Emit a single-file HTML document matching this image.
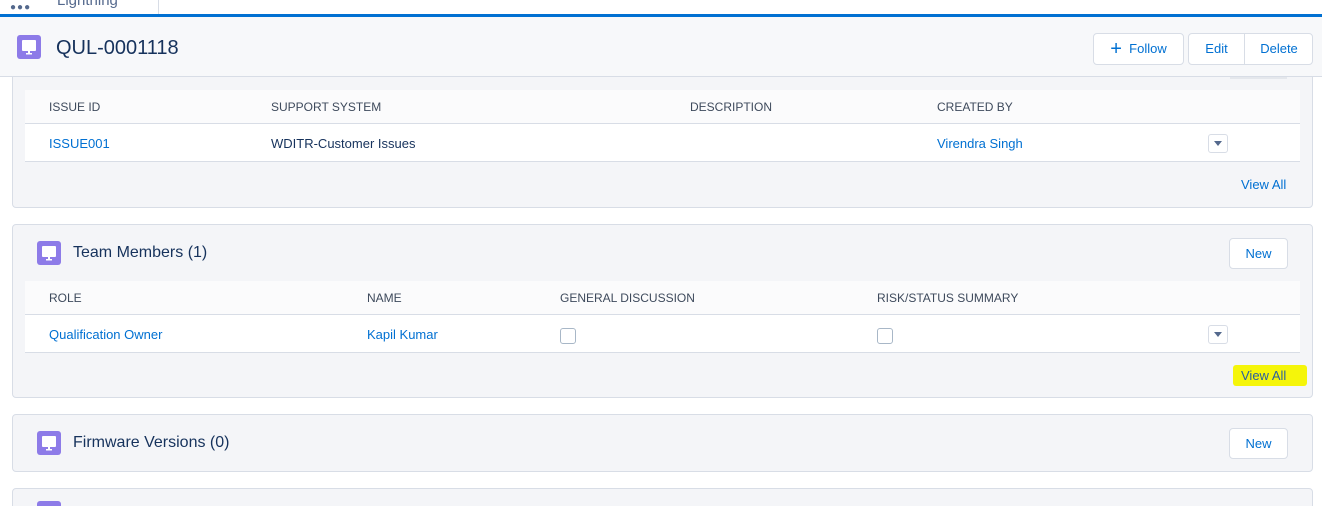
<!DOCTYPE html>
<html><head><style>
*{box-sizing:border-box;margin:0;padding:0}
html{width:1322px;height:506px;overflow:hidden}
body{width:1322px;height:506px;overflow:hidden;background:#fff;font-family:"Liberation Sans",sans-serif;color:#16325c;position:relative;font-size:13px}
.abs{position:absolute}
.top{left:0;top:0;width:1322px;height:14px;background:#fff}
.blue{left:0;top:14px;width:1322px;height:3px;background:#0070d2}
.hdr{left:0;top:17px;width:1322px;height:60px;background:#f7f8fa;border-bottom:1px solid #d8dde6}
.ico{width:24px;height:24px;background:#8d7be8;border-radius:3px}
.ico svg{display:block}
.card{left:12px;width:1301px;background:#f4f5f8;border:1px solid #d8dde6;border-radius:4px}
.th{background:#fbfbfc;height:34px;border-bottom:1px solid #d8dde6}
.row{background:#fff;height:38px;border-bottom:1px solid #d8dde6}
.t{position:absolute;white-space:nowrap}
.lh{font-size:12px;color:#3e4a5c}
.lk{color:#0070d2}
.btn{position:absolute;background:#fff;border:1px solid #d8dde6;border-radius:4px;color:#0070d2;font-size:13px;text-align:center}
.dd{position:absolute;width:20px;height:19px;border:1px solid #d8dde6;border-radius:3px;background:#fff}
.dd:after{content:"";position:absolute;left:5px;top:6px;border-left:4px solid transparent;border-right:4px solid transparent;border-top:5px solid #54698d}
.cb{position:absolute;width:16px;height:16px;border:1px solid #a8b7c7;border-radius:3px;background:#fff}
</style></head><body>
<div class="abs top"></div>
<div class="abs" style="left:10px;top:2px;font-size:10px;color:#54698d;letter-spacing:1px">●●●</div>
<div class="abs" style="left:57px;top:-8px;font-size:15px;color:#54698d">Lightning</div>
<div class="abs" style="left:158px;top:0;width:1px;height:14px;background:#d8dde6"></div>
<div class="abs blue"></div>
<div class="abs hdr"></div>
<div class="abs ico" style="left:17px;top:35px"><svg width="24" height="24"><rect x="5" y="5" width="14" height="11" rx="1" fill="#fff"/><rect x="11" y="16" width="2" height="2" fill="#fff"/><rect x="9" y="18" width="6" height="1.5" fill="#fff"/></svg></div>
<div class="abs" style="left:56px;top:37px;font-size:20px;color:#16325c">QUL-0001118</div>
<div class="btn" style="left:1093px;top:33px;width:91px;height:32px;line-height:30px"><span style="font-size:20px;vertical-align:-2px">+</span>&nbsp; Follow</div>
<div class="btn" style="left:1188px;top:33px;width:125px;height:32px;line-height:30px"><span style="position:absolute;left:0;width:55px">Edit</span><span style="position:absolute;left:55px;top:0;width:1px;height:30px;background:#d8dde6"></span><span style="position:absolute;left:56px;width:68px">Delete</span></div>

<div class="abs card" style="top:60px;height:148px;z-index:-1"></div>
<div class="abs" style="left:12px;top:77px;width:1301px;height:13px;background:#f4f5f8;border-left:1px solid #d8dde6;border-right:1px solid #d8dde6"></div>
<div class="abs" style="left:1230px;top:77px;width:57px;height:2px;background:#e4e7ec"></div>
<div class="abs th" style="left:25px;top:90px;width:1275px"></div>
<div class="t lh" style="left:49px;top:100px">ISSUE ID</div>
<div class="t lh" style="left:271px;top:100px">SUPPORT SYSTEM</div>
<div class="t lh" style="left:690px;top:100px">DESCRIPTION</div>
<div class="t lh" style="left:937px;top:100px">CREATED BY</div>
<div class="abs row" style="left:25px;top:124px;width:1275px"></div>
<div class="t lk" style="left:49px;top:136px">ISSUE001</div>
<div class="t" style="left:271px;top:136px;color:#16325c">WDITR-Customer Issues</div>
<div class="t lk" style="left:937px;top:136px">Virendra Singh</div>
<div class="dd" style="left:1208px;top:134px"></div>
<div class="t lk" style="left:1241px;top:177px">View All</div>

<div class="abs card" style="top:224px;height:174px"></div>
<div class="abs ico" style="left:37px;top:241px"><svg width="24" height="24"><rect x="5" y="5" width="14" height="11" rx="1" fill="#fff"/><rect x="11" y="16" width="2" height="2" fill="#fff"/><rect x="9" y="18" width="6" height="1.5" fill="#fff"/></svg></div>
<div class="t" style="left:73px;top:244px;font-size:16px">Team Members (1)</div>
<div class="btn" style="left:1229px;top:238px;width:59px;height:31px;line-height:29px">New</div>
<div class="abs th" style="left:25px;top:281px;width:1275px"></div>
<div class="t lh" style="left:49px;top:291px">ROLE</div>
<div class="t lh" style="left:367px;top:291px">NAME</div>
<div class="t lh" style="left:560px;top:291px">GENERAL DISCUSSION</div>
<div class="t lh" style="left:877px;top:291px">RISK/STATUS SUMMARY</div>
<div class="abs row" style="left:25px;top:315px;width:1275px"></div>
<div class="t lk" style="left:49px;top:327px">Qualification Owner</div>
<div class="t lk" style="left:367px;top:327px">Kapil Kumar</div>
<div class="cb" style="left:560px;top:328px"></div>
<div class="cb" style="left:877px;top:328px"></div>
<div class="dd" style="left:1208px;top:325px"></div>
<div class="abs" style="left:1233px;top:365px;width:74px;height:21px;background:#f5f50a;border-radius:3px"></div>
<div class="t" style="left:1241px;top:368px;color:#2b5fa0">View All</div>

<div class="abs card" style="top:414px;height:58px"></div>
<div class="abs ico" style="left:37px;top:431px"><svg width="24" height="24"><rect x="5" y="5" width="14" height="11" rx="1" fill="#fff"/><rect x="11" y="16" width="2" height="2" fill="#fff"/><rect x="9" y="18" width="6" height="1.5" fill="#fff"/></svg></div>
<div class="t" style="left:73px;top:434px;font-size:16px">Firmware Versions (0)</div>
<div class="btn" style="left:1229px;top:428px;width:59px;height:31px;line-height:29px">New</div>

<div class="abs card" style="top:488px;height:30px"></div>
<div class="abs ico" style="left:37px;top:501px"></div>
</body></html>
